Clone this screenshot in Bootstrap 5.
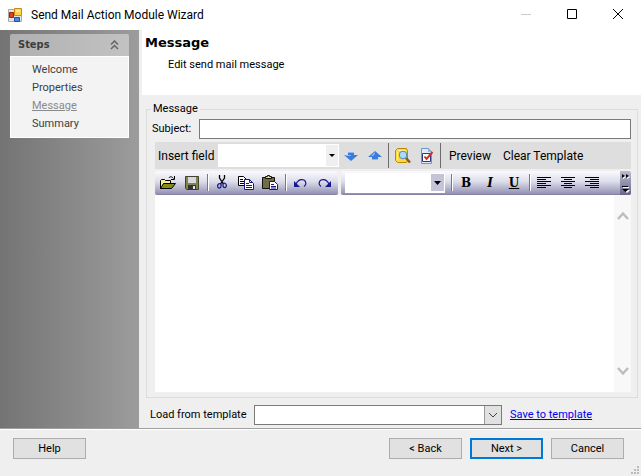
<!DOCTYPE html>
<html lang="en">
<head>
<meta charset="utf-8">
<meta name="viewport" content="width=device-width, initial-scale=1">
<title>Send Mail Action Module Wizard</title>
<link href="https://cdn.jsdelivr.net/npm/bootstrap@5.3.0/dist/css/bootstrap.min.css" rel="stylesheet">
<style>
body { font: 11px/18px Roboto, "Noto Sans", sans-serif; color: #000; background: #efefef; }
svg { display: block; flex: none; }
.titlebar { height: 30px; padding-left: 8px; font: 12px/30px Roboto, sans-serif; }
.win-btn { width: 46px; height: 30px; padding: 0 0 2px; border: 0; background: none; display: flex; align-items: center; justify-content: center; }
.sidebar { width: 139px; padding: 4px 10px; background: linear-gradient(90deg, #747474, #9c9c9c); }
.steps-head { height: 22px; padding: 0 10px 0 8px; border: 0; border-radius: 2px 2px 0 0; font: bold 11px/22px "DejaVu Sans Condensed", sans-serif; color: #3c3c3c; background: linear-gradient(90deg, #b0b0b0, #c2c2c2); }
.steps-list { padding: 4px 0 4px 21px; background: #f3f3f3; border: 1px solid #fff; }
.steps-list a { color: #404040; text-decoration: none; display: block; }
.steps-list a.current { color: #8a8a8a; text-decoration: underline; }
.page-head { height: 65px; margin-left: 3px; padding: 4px 3px; }
.page-head h1 { margin: 0; font: bold 13px/17px "DejaVu Sans", sans-serif; }
.page-head p { margin: 5px 0 0 23px; }
.form-area { padding: 7px 3px 2px 7px; }
.group { border: 1px solid #dcdcdc; padding: 3px 6px 5px; min-width: 0; }
.group legend { float: none; width: auto; margin: 0 0 0 -2px; padding: 0 2px; font-size: 11px; line-height: 14px; }
.field-label { width: 47px; flex: none; margin-left: -1px; }
.field-text, .template-select { height: 20px; border: 1px solid #7a7a7a; border-radius: 0; background-color: #fff; padding: 0 4px; min-width: 0; }
.strip, .format-row { margin-left: 2px; }
.strip { height: 27px; margin-top: 3px; padding-left: 3px; background: #dedede; }
.strip-label { width: 60px; font-size: 12px; }
.combo { appearance: none; border: 0; border-radius: 0; padding: 0 18px 0 4px; background-color: #fff; background-position: right center; background-repeat: no-repeat; }
.combo-insert { width: 121px; height: 23px; background-image: url("data:image/svg+xml,%3Csvg xmlns='http://www.w3.org/2000/svg' width='13' height='23'%3E%3Cpath fill='%23efefef' d='M0 1h12v21H0z'/%3E%3Cpath d='M3 10h6L6 13z'/%3E%3C/svg%3E"); }
.combo-font { width: 100px; height: 20px; margin: 0 3px 0 4px; background-image: url("data:image/svg+xml,%3Csvg xmlns='http://www.w3.org/2000/svg' width='14' height='19'%3E%3Cpath fill='%23c4c3d8' d='M0 1h13v17H0z'/%3E%3Cpath d='M3 8h7L6.500 12z'/%3E%3C/svg%3E"); }
.template-label { width: 104px; }
.template-select { appearance: none; width: 248px; background: #fff url("data:image/svg+xml,%3Csvg xmlns='http://www.w3.org/2000/svg' width='17' height='18'%3E%3Cpath fill='%23e1e1e1' d='M0 0h17v18H0z'/%3E%3Cpath fill='%23999' d='M0 0h1v18H0z'/%3E%3Cpath d='M5 7l4 4 4-4' fill='none' stroke='%23444'/%3E%3C/svg%3E") no-repeat right center; }
.tool { width: 24px; height: 23px; padding: 0; border: 0; background: none; display: flex; align-items: center; justify-content: center; flex: none; }
.tool-glyph { font: bold 12px/20px "DejaVu Serif", serif; }
.tool-text { padding: 0 6px; border: 0; background: none; font-size: 12px; }
.rule { width: 4px; height: 25px; border-left: 1px solid #6c6c6c; margin-left: 1px; margin-right: -1px; flex: none; }
.rule-soft { width: 2px; height: 17px; margin: 0 1px 0 3px; border-left: 1px solid #75749c; border-right: 1px solid #fff; flex: none; }
.format-row { gap: 3px; padding-top: 2px; }
.format-bar { height: 24px; background: linear-gradient(#fafafd, #dedeeb 45%, #9391b3); border-bottom: 1px solid #8582a5; border-radius: 2px; }
.edit-bar { padding: 0 2px 0 1px; }
.bar-more { width: 11px; height: 24px; padding: 0; border: 0; border-radius: 0 2px 2px 0; background: linear-gradient(#bdbccd, #67658c); }
.editor { margin-left: 2px; min-height: 80px; background: #fff; }
.editor textarea { border: 0; resize: none; outline: 0; min-width: 0; padding: 4px; }
.editor-scroll { width: 17px; padding: 16px 0; background: #f8f8f8; }
.editor-scroll button { padding: 0; border: 0; background: none; display: flex; justify-content: center; }
.template-row { padding-left: 4px; margin-top: 7px; padding-bottom: 1px; }
.save-link { color: #0000e8; margin-left: 8px; }
.footer { height: 48px; padding: 9px 17px 0 13px; border-top: 1px solid #a0a0a0; box-shadow: inset 0 1px #fff; gap: 8px; position: relative; }
.wizard-btn { width: 73px; height: 21px; border: 1px solid #adadad; border-radius: 0; padding: 0; background: #e1e1e1; color: #000; font-size: 11px; line-height: 17px; }
.wizard-btn.primary { border: 2px solid #0078d7; }
.size-grip { position: absolute; right: 2px; bottom: 2px; }
</style>
<script src="https://cdn.jsdelivr.net/npm/bootstrap@5.3.0/dist/js/bootstrap.bundle.min.js"></script>
</head>
<body class="d-flex flex-column vh-100 overflow-hidden">
<header class="titlebar bg-white d-flex align-items-center">
  <svg width="15" height="15" viewBox="0 0 15 15"><path fill="#e4e4e4" stroke="#a8a8a8" d="M.5 1.500h13v12H.5z"/><path fill="#d4471f" stroke="#9c2507" d="M1.500 4.500h4v5h-4z"/><path fill="#ffd24a" stroke="#c88a10" d="M6.500.5h7v7h-7z"/><path fill="#4a86e0" stroke="#2354a8" d="M6.500 9.500h5v4h-5z"/><path fill="#ffe99a" d="M8 2h4v2H8z"/></svg>
  <span class="ms-1 ps-1 flex-grow-1">Send Mail Action Module Wizard</span>
  <button class="win-btn" type="button" aria-label="Minimize" disabled><svg width="10" height="10"><path fill="#ccc" d="M0 5h10v1H0z"/></svg></button>
  <button class="win-btn" type="button" aria-label="Maximize"><svg width="10" height="10"><path fill="none" stroke="#000" d="M.5.5h9v9h-9z"/></svg></button>
  <button class="win-btn" type="button" aria-label="Close"><svg width="10" height="10"><path stroke="#000" d="M0 0l10 10M10 0L0 10"/></svg></button>
</header>

<div class="d-flex flex-grow-1 overflow-hidden">
  <aside class="sidebar flex-shrink-0">
    <button class="steps-head w-100 d-flex align-items-center justify-content-between" type="button">Steps
      <svg width="9" height="10" viewBox="0 0 9 10"><path fill="none" stroke="#666" stroke-width="1.500" d="M1 4.500l3.500-3.500L8 4.500M1 9l3.500-3.500L8 9"/></svg>
    </button>
    <nav class="steps-list" aria-label="Steps">
      <a href="#">Welcome</a>
      <a href="#">Properties</a>
      <a href="#" class="current" aria-current="step">Message</a>
      <a href="#">Summary</a>
    </nav>
  </aside>

  <main class="d-flex flex-column flex-grow-1 overflow-hidden">
    <div class="page-head bg-white">
      <h1>Message</h1>
      <p>Edit send mail message</p>
    </div>
    <div class="form-area d-flex flex-column flex-grow-1">
      <fieldset class="group d-flex flex-column flex-grow-1">
        <legend>Message</legend>
        <div class="d-flex align-items-center">
          <label class="field-label" for="subject">Subject:</label>
          <input class="field-text flex-grow-1" id="subject" type="text">
        </div>
        <div class="strip d-flex align-items-center">
          <label class="strip-label" for="field">Insert field</label>
          <select class="combo combo-insert" id="field"><option></option></select>
          <button class="tool" type="button" aria-label="Move down"><svg width="14" height="10" viewBox="0 0 14 10"><path fill="#3a7be0" d="M4 1h6v3h4L7 10 0 4h4z"/><path fill="#8db8f5" d="M4 1h6v1H4zM1 4h6v1H2z"/></svg></button>
          <button class="tool" type="button" aria-label="Move up"><svg width="14" height="10" viewBox="0 0 14 10"><path fill="#3a7be0" d="M4 9h6V6h4L7 0 0 6h4z"/><path fill="#8db8f5" d="M4 8h6v1H4zM3 5l4-4v2L5 5z"/></svg></button>
          <span class="rule"></span>
          <button class="tool" type="button" aria-label="Look up"><svg width="16" height="16" viewBox="0 0 16 16"><path fill="#ffd83d" stroke="#b98a0a" d="M.5 2.500l2-2h9l1 2v10l-1 2h-9l-2-2z"/><path fill="#fff3a0" d="M3 2h7v1H3zM2 4h1v8H2z"/><circle cx="8" cy="7" r="3.800" fill="#a8dcf8" stroke="#5488b8"/><path stroke="#8b5a1c" stroke-width="2.500" d="M11 10l4 4.500"/></svg></button>
          <button class="tool" type="button" aria-label="Validate"><svg width="14" height="16" viewBox="0 0 14 16"><path fill="#dcecff" stroke="#6f95cc" d="M1.500.5h7l3 3v12h-10z"/><path fill="#8fb4e8" d="M8 0v4h4z"/><path fill="#fff" stroke="#263b80" d="M2.500 5.500h8v8h-8z"/><path fill="none" stroke="#e02a1a" stroke-width="2" d="M4.500 8.500L6.500 11 12.500 4"/></svg></button>
          <span class="rule"></span>
          <button class="tool-text" type="button">Preview</button>
          <button class="tool-text" type="button">Clear Template</button>
        </div>
        <div class="format-row d-flex">
          <div class="format-bar edit-bar d-flex align-items-center">
            <button class="tool" type="button" aria-label="Open"><svg width="16" height="14" viewBox="0 0 16 14"><path fill="#f5ef9a" stroke="#000" d="M.5 12.500v-8l1-1h3l1 1h5v3"/><path fill="#8b8a16" stroke="#000" d="M.5 12.500l3-5h12l-4 5z"/><path fill="none" stroke="#000" d="M9 2c1-2 3-1.500 4.500.5M14.500 0v3.500H11"/></svg></button>
            <button class="tool" type="button" aria-label="Save"><svg width="14" height="14" viewBox="0 0 14 14"><path fill="#85834d" stroke="#44442e" d="M.5.5h13v13h-12l-1-1z"/><path fill="#d8d8e4" d="M3 1h8v6H3z"/><path fill="#333" d="M3 9h8v5H3z"/><path fill="#e4e4ec" d="M8 10h2v3H8z"/></svg></button>
            <span class="rule-soft"></span>
            <button class="tool" type="button" aria-label="Cut"><svg width="10" height="15" viewBox="0 0 10 15"><path fill="none" stroke="#000" stroke-width="1.300" d="M2.500 0v3l4 6M7.500 0v3l-4 6"/><path fill="none" stroke="#171790" stroke-width="1.300" d="M4 9c-2-1-3.500 0-3.300 2.500C1 14 4 13.500 4 11zM6 8.500c2-1 3.500.5 3.300 2.500-.3 2.500-3.300 2-3.300-.5z"/></svg></button>
            <button class="tool" type="button" aria-label="Copy"><svg width="16" height="14" viewBox="0 0 16 14"><path fill="#fff" stroke="#000" d="M.5.5h5l3 3v6h-8z"/><path stroke="#000" d="M2 3.500h3M2 5.500h4M2 7.500h4"/><path fill="#fff" stroke="#171780" d="M6.500 3.500h5l4 4v6h-9z"/><path fill="none" stroke="#171780" d="M11.500 3.500v3h3M8 7.500h3M8 9.500h6M8 11.500h6"/></svg></button>
            <button class="tool" type="button" aria-label="Paste"><svg width="16" height="15" viewBox="0 0 16 15"><path fill="#6f6e45" stroke="#111" d="M.5 2.500h12v11H.5z"/><path fill="#e8df70" stroke="#111" d="M3.500 3.500v-2h2v-1h2v1h2v2z"/><path fill="#fff" stroke="#171780" d="M7.500 6.500h5l3 3v5h-8z"/><path stroke="#171780" d="M9 9.500h3M9 11.500h5M9 13h5"/></svg></button>
            <span class="rule-soft"></span>
            <button class="tool" type="button" aria-label="Undo"><svg width="13" height="8" viewBox="0 0 13 8"><path fill="#171790" d="M0 2v6h6z"/><path fill="none" stroke="#171790" stroke-width="1.200" d="M2 5c2-4 5-5 8-4 2.500 1.500 2.500 5 0 6.500"/></svg></button>
            <button class="tool" type="button" aria-label="Redo"><svg width="13" height="8" viewBox="0 0 13 8"><path fill="#171790" d="M13 2v6H7z"/><path fill="none" stroke="#171790" stroke-width="1.200" d="M11 5C9 1 6 0 3 1 .5 2.500.5 6 3 7.500"/></svg></button>
          </div>
          <div class="format-bar d-flex align-items-center flex-grow-1">
            <select class="combo combo-font" aria-label="Font"><option></option></select>
            <span class="rule-soft"></span>
            <button class="tool tool-glyph" type="button" aria-label="Bold">B</button>
            <button class="tool tool-glyph fst-italic" type="button" aria-label="Italic">I</button>
            <button class="tool tool-glyph text-decoration-underline" type="button" aria-label="Underline">U</button>
            <span class="rule-soft"></span>
            <button class="tool" type="button" aria-label="Align left"><svg width="14" height="11"><path stroke="#000" d="M0 .5h14M0 2.500h9M0 4.500h14M0 6.500h9M0 8.500h14M0 10.500h9"/></svg></button>
            <button class="tool" type="button" aria-label="Align center"><svg width="14" height="11"><path stroke="#000" d="M0 .5h14M3 2.500h8M0 4.500h14M3 6.500h8M0 8.500h14M3 10.500h8"/></svg></button>
            <button class="tool" type="button" aria-label="Align right"><svg width="14" height="11"><path stroke="#000" d="M0 .5h14M5 2.500h9M0 4.500h14M5 6.500h9M0 8.500h14M5 10.500h9"/></svg></button>
            <button class="bar-more ms-auto" type="button" aria-label="More tools"><svg width="11" height="24" viewBox="0 0 11 24"><path fill="#fff" d="M3 4l3 2-3 2zM7 4l3 2-3 2zM3 16h6v1H3zM4 19h6l-3 3z"/><path d="M2 3l3 2-3 2zM6 3l3 2-3 2zM2 15h6v1H2zM2 18h7l-3.500 3z"/></svg></button>
          </div>
        </div>
        <div class="editor d-flex flex-grow-1">
          <textarea class="flex-grow-1" aria-label="Message body"></textarea>
          <div class="editor-scroll d-flex flex-column justify-content-between">
            <button type="button" aria-label="Scroll up"><svg width="12" height="10" viewBox="0 0 12 10"><path fill="none" stroke="#bdbdbd" stroke-width="2.500" d="M1 8l5-5.500L11 8"/></svg></button>
            <button type="button" aria-label="Scroll down"><svg width="12" height="10" viewBox="0 0 12 10"><path fill="none" stroke="#bdbdbd" stroke-width="2.500" d="M1 2l5 5.500L11 2"/></svg></button>
          </div>
        </div>
      </fieldset>
      <div class="template-row d-flex align-items-center">
        <label class="template-label" for="template">Load from template</label>
        <select class="template-select" id="template"><option></option></select>
        <a class="save-link" href="#">Save to template</a>
      </div>
    </div>
  </main>
</div>

<footer class="footer d-flex align-items-start flex-shrink-0">
  <button class="wizard-btn me-auto" type="button">Help</button>
  <button class="wizard-btn" type="button">&lt; Back</button>
  <button class="wizard-btn primary" type="button">Next &gt;</button>
  <button class="wizard-btn" type="button">Cancel</button>
  <svg class="size-grip" width="8" height="8" viewBox="0 0 8 8"><path fill="#bbb" d="M6 0h2v2H6zM3 3h2v2H3zM6 3h2v2H6zM0 6h2v2H0zM3 6h2v2H3zM6 6h2v2H6z"/></svg>
</footer>
</body>
</html>
